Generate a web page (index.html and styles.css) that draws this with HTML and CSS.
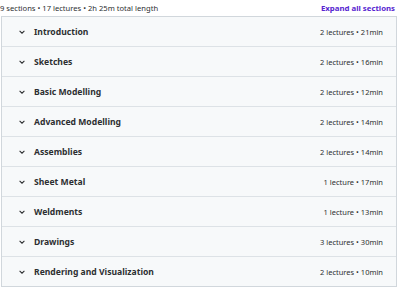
FILE: index.html
```html
<html lang="en">
<head>
    <meta charset="UTF-8">
    <title>Course content</title>
    <link rel="stylesheet" href="styles.css">
</head>
<body>
    <div class="content">
        <div class="summary">
            <span class="stats">9 sections • 17 lectures • 2h 25m total length</span>
            <a class="expand" href="#">Expand all sections</a>
        </div>
        <div class="sections">
            <div class="section">
                <svg class="chevron" viewBox="0 0 10 10"><path d="M2 3.5 L5 6.5 L8 3.5"/></svg>
                <span class="title">Introduction</span>
                <span class="meta">2 lectures • 21min</span>
            </div>
            <div class="section">
                <svg class="chevron" viewBox="0 0 10 10"><path d="M2 3.5 L5 6.5 L8 3.5"/></svg>
                <span class="title">Sketches</span>
                <span class="meta">2 lectures • 16min</span>
            </div>
            <div class="section">
                <svg class="chevron" viewBox="0 0 10 10"><path d="M2 3.5 L5 6.5 L8 3.5"/></svg>
                <span class="title">Basic Modelling</span>
                <span class="meta">2 lectures • 12min</span>
            </div>
            <div class="section">
                <svg class="chevron" viewBox="0 0 10 10"><path d="M2 3.5 L5 6.5 L8 3.5"/></svg>
                <span class="title">Advanced Modelling</span>
                <span class="meta">2 lectures • 14min</span>
            </div>
            <div class="section">
                <svg class="chevron" viewBox="0 0 10 10"><path d="M2 3.5 L5 6.5 L8 3.5"/></svg>
                <span class="title">Assemblies</span>
                <span class="meta">2 lectures • 14min</span>
            </div>
            <div class="section">
                <svg class="chevron" viewBox="0 0 10 10"><path d="M2 3.5 L5 6.5 L8 3.5"/></svg>
                <span class="title">Sheet Metal</span>
                <span class="meta">1 lecture • 17min</span>
            </div>
            <div class="section">
                <svg class="chevron" viewBox="0 0 10 10"><path d="M2 3.5 L5 6.5 L8 3.5"/></svg>
                <span class="title">Weldments</span>
                <span class="meta">1 lecture • 13min</span>
            </div>
            <div class="section">
                <svg class="chevron" viewBox="0 0 10 10"><path d="M2 3.5 L5 6.5 L8 3.5"/></svg>
                <span class="title">Drawings</span>
                <span class="meta">3 lectures • 30min</span>
            </div>
            <div class="section">
                <svg class="chevron" viewBox="0 0 10 10"><path d="M2 3.5 L5 6.5 L8 3.5"/></svg>
                <span class="title">Rendering and Visualization</span>
                <span class="meta">2 lectures • 10min</span>
            </div>
        </div>
    </div>
</body>
</html>
```

FILE: styles.css
```css
body {
    margin: 0;
    padding: 0;
    background: #ffffff;
    font-family: "Noto Sans", "Liberation Sans", sans-serif;
    color: #2d2f31;
}

.content {
    width: 396px;
    margin-left: 1px;
}

.summary {
    height: 16px;
    display: flex;
    align-items: center;
    justify-content: space-between;
}
.stats {
    font-size: 7.6px;
    color: #2d2f31;
    margin-left: -1px;
}
.expand {
    font-size: 7.8px;
    font-weight: bold;
    color: #5624d0;
    text-decoration: none;
    margin-right: 2px;
}

.sections {
    border: 1px solid #d1d7dc;
    border-bottom: none;
}
.section {
    height: 29px;
    display: flex;
    align-items: center;
    background: #f7f9fa;
    border-bottom: 1px solid #dde2e6;
    padding: 0 13px 0 16px;
}
.section:last-child {
    border-bottom-color: #d1d7dc;
}
.chevron {
    width: 8px;
    height: 8px;
    fill: none;
    stroke: #2d2f31;
    stroke-width: 1.3;
    margin-right: 8px;
}
.title {
    flex: 1;
    font-size: 8.6px;
    font-weight: bold;
}
.meta {
    font-size: 7.5px;
}
```
